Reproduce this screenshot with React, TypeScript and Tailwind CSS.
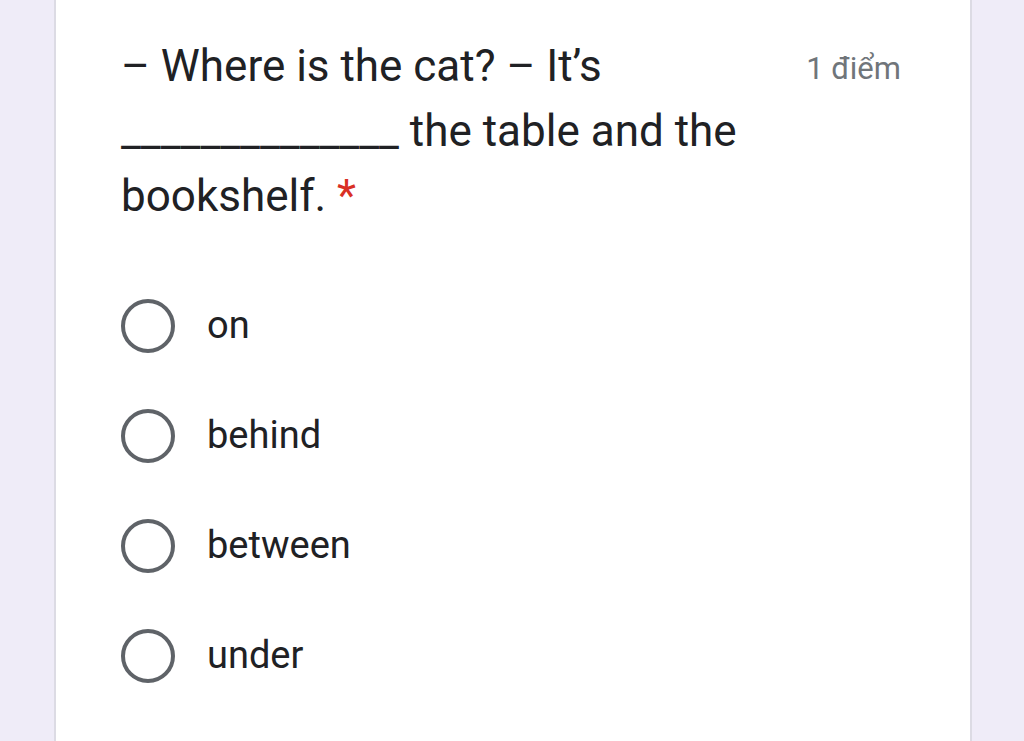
const options = ['on', 'behind', 'between', 'under']

function Radio() {
  return <span className="w-[54px] h-[54px] rounded-full border-[4px] border-[#5f6368] shrink-0" />
}

export default function App() {
  return (
    <div
      className="min-h-[741px] bg-[#efecf8] flex"
      style={{ fontFamily: 'Roboto, "Noto Sans", sans-serif' }}
    >
      <div className="ml-[54px] w-[918px] bg-white border-x-2 border-[#dcdbe4] pl-[65px] pr-[69px] pt-[34px]">
        <div className="flex justify-between items-start">
          <h1 className="w-[640px] text-[44px] leading-[65px] text-[#202124]">
            – Where is the cat? – It’s ______________ the table and the bookshelf.{' '}
            <span className="text-[#d93025]">*</span>
          </h1>
          <span className="text-[31px] leading-[65px] text-[#70757a] pt-[2px]">1 điểm</span>
        </div>
        <div className="mt-[69px] flex flex-col gap-[55px]">
          {options.map((o) => (
            <label key={o} className="flex items-center gap-[32px]">
              <Radio />
              <span className="text-[38px] leading-[55px] text-[#202124]">{o}</span>
            </label>
          ))}
        </div>
      </div>
    </div>
  )
}
